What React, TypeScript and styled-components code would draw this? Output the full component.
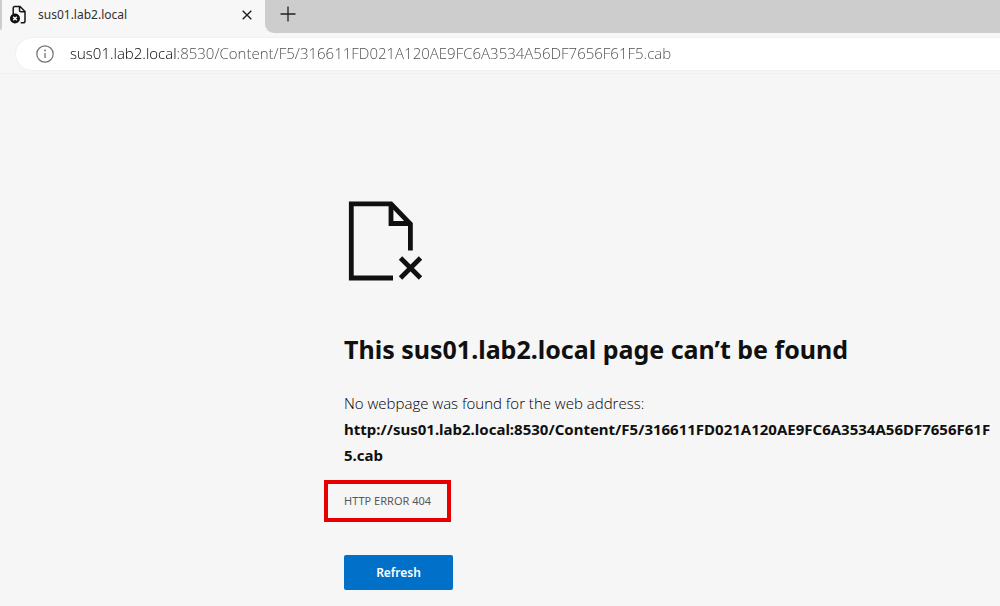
import React from "react";
import styled, { createGlobalStyle } from "styled-components";

const PATH = "/Content/F5/316611FD021A120AE9FC6A3534A56DF7656F61F5.cab";
const HOST = "sus01.lab2.local";

const GlobalStyle = createGlobalStyle`
  * { box-sizing: border-box; }
  body {
    margin: 0;
    background: #f6f6f6;
    color: #101010;
    font-family: "Noto Sans", "Open Sans", sans-serif;
  }
`;

const TabStrip = styled.header`
  display: flex;
  height: 33px;
  background: #f7f7f7;
`;

const Edge = styled.div`
  width: 2px;
  height: 30px;
  background: #cdcdcd;
  border-bottom-right-radius: 2px;
`;

const Tab = styled.div`
  display: flex;
  align-items: center;
  width: 263px;
  padding: 0 10px 4px 7px;
`;

const TabTitle = styled.span`
  flex: 1;
  margin-left: 11px;
  font-size: 12px;
  line-height: 20px;
  color: #303030;
`;

const IconButton = styled.button<{ $size: number }>`
  display: grid;
  place-items: center;
  width: ${(p) => p.$size}px;
  height: ${(p) => p.$size}px;
  padding: 0;
  border: 0;
  background: transparent;
  color: #202020;
`;

const StripRest = styled.div`
  flex: 1;
  padding: 0 9px;
  background: #cdcdcd;
  border-bottom-left-radius: 9px;
`;

const Toolbar = styled.div`
  padding: 5px 0 3px 16px;
  background: #f7f7f7;
  border-bottom: 1px solid #eeeeee;
`;

const AddressBar = styled.form`
  display: flex;
  align-items: center;
  height: 32px;
  padding-left: 20px;
  background: #ffffff;
  border-radius: 16px 0 0 16px;
  box-shadow: 0 0 2px #e4e4e4;
`;

const AddressInput = styled.input`
  flex: 1;
  min-width: 0;
  margin-left: 16px;
  padding: 0 0 2px;
  border: 0;
  outline: 0;
  font-family: "Open Sans", "Noto Sans", sans-serif;
  font-size: 15px;
  font-weight: 300;
  line-height: 24px;
  color: transparent;
  background: linear-gradient(to right, #000000 107px, #484848 107px);
  background-clip: text;
  -webkit-background-clip: text;
`;

const Page = styled.main`
  display: flex;
  flex-direction: column;
  align-items: flex-start;
  padding: 125px 8px 16px 34.4%;
`;

const Title = styled.h1`
  margin: 50px 0 0;
  font-size: 25px;
  line-height: 36px;
  font-weight: 700;
`;

const Message = styled.p`
  margin: 23px 0 0;
  font-family: "Open Sans", "Noto Sans", sans-serif;
  font-size: 15px;
  font-weight: 300;
  line-height: 26px;
  color: #000000;
`;

const FailedUrl = styled.strong`
  display: block;
  font-family: "Noto Sans", "Open Sans", sans-serif;
  font-weight: 700;
  color: #101010;
  word-break: break-all;
`;

const ErrorCode = styled.div`
  margin: 12px 0 0 -20px;
  padding: 6px 16px;
  border: 4px solid #e60000;
  font-size: 11px;
  line-height: 22px;
  color: #585858;
`;

const RefreshButton = styled.button`
  width: 109px;
  height: 35px;
  margin-top: 33px;
  border: 0;
  border-radius: 2px;
  background: #0070c9;
  color: #ffffff;
  font-family: inherit;
  font-size: 12px;
  font-weight: 600;
`;

export default function App() {
  return (
    <>
      <GlobalStyle />
      <TabStrip>
        <Edge />
        <Tab>
          <svg width="18" height="20" viewBox="0 0 18 20" fill="none" stroke="#161616" aria-hidden="true">
            <path d="M4.200 9V3.200c0-1 .6-1.700 1.600-1.700H11l5 5V16c0 1.200-.7 1.800-1.800 1.800h-2.500M10.500 1.500v3.700c0 1 .5 1.500 1.500 1.500h4" strokeWidth="1.500" />
            <circle cx="6" cy="13.500" r="5" fill="#111" stroke="none" />
            <path d="m4.200 11.700 3.600 3.600m0-3.600-3.600 3.600" stroke="#fff" strokeWidth="1.400" />
          </svg>
          <TabTitle>{HOST}</TabTitle>
          <IconButton $size={16} type="button" aria-label="Close tab">
            <svg width="10" height="10" viewBox="0 0 10 10" stroke="currentColor" strokeWidth="1.400">
              <path d="m.7.7 8.600 8.600m0-8.600L.7 9.300" />
            </svg>
          </IconButton>
        </Tab>
        <StripRest>
          <IconButton $size={28} type="button" aria-label="New tab">
            <svg width="16" height="16" viewBox="0 0 16 16" stroke="currentColor" strokeWidth="1.300">
              <path d="M8 .5v15M.5 8h15" />
            </svg>
          </IconButton>
        </StripRest>
      </TabStrip>
      <Toolbar>
        <AddressBar onSubmit={(e) => e.preventDefault()}>
          <svg width="18" height="18" viewBox="0 0 18 18" fill="none" stroke="#707070" aria-hidden="true">
            <circle cx="9" cy="9" r="8.200" strokeWidth="1.200" />
            <path d="M9 8v5" strokeWidth="1.300" />
            <circle cx="9" cy="5.500" r=".9" fill="#707070" stroke="none" />
          </svg>
          <AddressInput
            type="text"
            aria-label="Address"
            spellCheck={false}
            defaultValue={`${HOST}:8530${PATH}`}
          />
        </AddressBar>
      </Toolbar>
      <Page>
        <svg width="80" height="82" viewBox="0 0 80 82" fill="none" stroke="#101010" strokeWidth="4.800" aria-hidden="true">
          <path d="M49 79H7.300V4.800H47L66.400 25V51.500" />
          <path d="M47 4.800V24.500H66.400" />
          <path d="m56.500 59 20 20m0-20-20 20" />
        </svg>
        <Title>This {HOST} page can’t be found</Title>
        <Message>
          No webpage was found for the web address:
          <FailedUrl>{`http://${HOST}:8530${PATH}`}</FailedUrl>
        </Message>
        <ErrorCode>HTTP ERROR 404</ErrorCode>
        <RefreshButton type="button" onClick={() => window.location.reload()}>
          Refresh
        </RefreshButton>
      </Page>
    </>
  );
}
